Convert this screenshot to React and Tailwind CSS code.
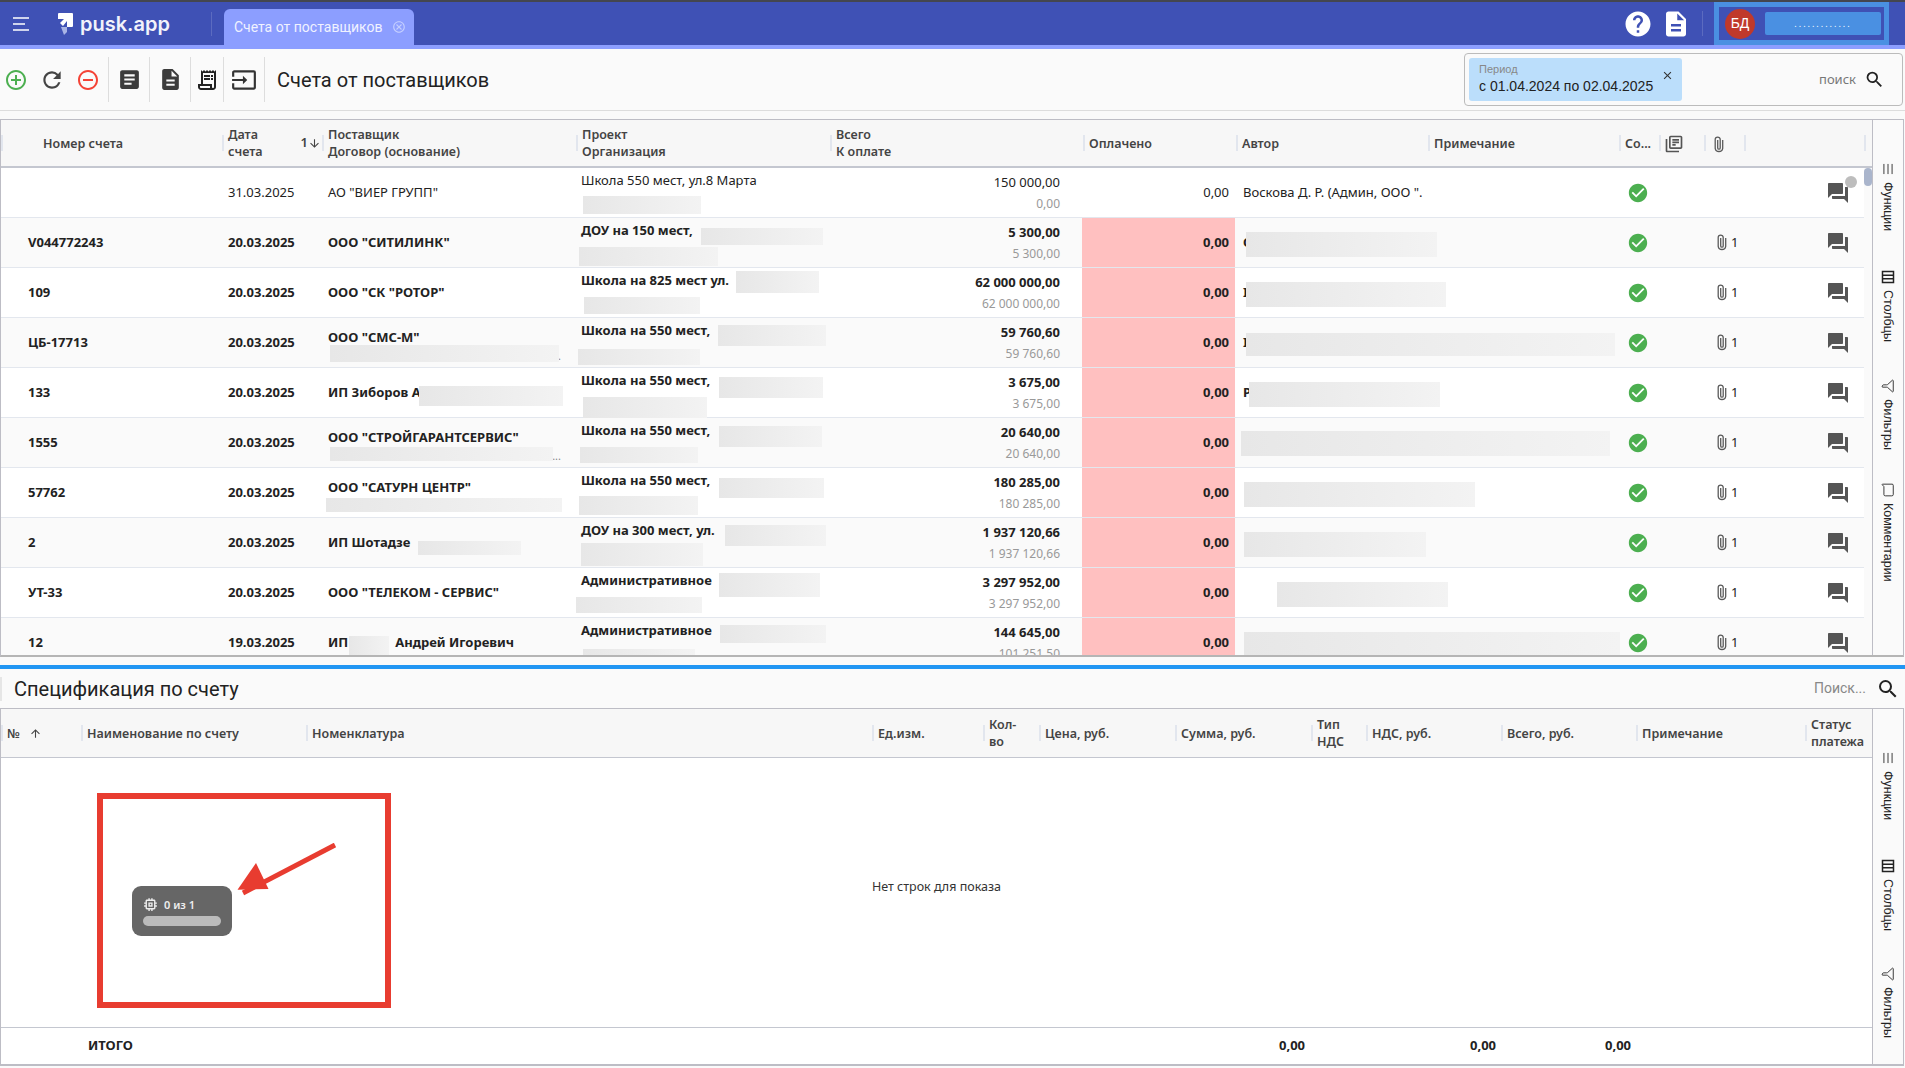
import { Menu, Filter, MessageSquare } from 'lucide-react';
import {
  MdAddCircleOutline, MdRefresh, MdRemoveCircleOutline, MdArticle, MdDescription, MdOutlineReceiptLong,
  MdOutlineInput, MdHelp, MdSearch, MdClose, MdCheckCircle, MdQuestionAnswer, MdOutlineLibraryBooks,
  MdMemory, MdArrowDownward, MdArrowUpward, MdOutlineCancel,
} from 'react-icons/md';

const mainCols = [
  { w: 'w-[221px]', pl: 'pl-[40px]', label: ['Номер счета'] },
  { w: 'w-[100px]', label: ['Дата', 'счета'], sort: true },
  { w: 'w-[254px]', label: ['Поставщик', 'Договор (основание)'] },
  { w: 'w-[254px]', label: ['Проект', 'Организация'] },
  { w: 'w-[253px]', label: ['Всего', 'К оплате'] },
  { w: 'w-[153px]', label: ['Оплачено'] },
  { w: 'w-[192px]', label: ['Автор'] },
  { w: 'w-[191px]', label: ['Примечание'] },
  { w: 'w-[40px]', label: ['Со...'] },
  { w: 'w-[45px]', icon: 'books' },
  { w: 'w-[40px]', icon: 'clip' },
  { w: 'w-[120px]', label: [] },
  { w: 'w-[1px]', label: [] },
];

const specCols = [
  { w: 'w-[80px]', label: ['№'], asc: true },
  { w: 'w-[225px]', label: ['Наименование по счету'] },
  { w: 'w-[566px]', label: ['Номенклатура'] },
  { w: 'w-[111px]', label: ['Ед.изм.'] },
  { w: 'w-[56px]', label: ['Кол-', 'во'] },
  { w: 'w-[136px]', label: ['Цена, руб.'] },
  { w: 'w-[136px]', label: ['Сумма, руб.'] },
  { w: 'w-[55px]', label: ['Тип', 'НДС'] },
  { w: 'w-[135px]', label: ['НДС, руб.'] },
  { w: 'w-[135px]', label: ['Всего, руб.'] },
  { w: 'w-[169px]', label: ['Примечание'] },
  { w: 'w-[67px]', label: ['Статус', 'платежа'] },
];

// blur = [x1, x2, top in row, height], the redacted bits of the screenshot
const rows = [
  { num: '', date: '31.03.2025', sup: 'АО "ВИЕР ГРУПП"', proj: 'Школа 550 мест, ул.8 Марта', total: '150 000,00', pay: '0,00', author: 'Воскова Д. Р. (Админ, ООО ".', plain: true, noClip: true,
    blurs: [[583, 701, 28, 18]] },
  { num: 'V044772243', date: '20.03.2025', sup: 'ООО "СИТИЛИНК"', proj: 'ДОУ на 150 мест,', total: '5 300,00', pay: '5 300,00', author: 'О',
    blurs: [[701, 823, 10, 17], [579, 718, 29, 19], [1246, 1437, 14, 25]] },
  { num: '109', date: '20.03.2025', sup: 'ООО "СК "РОТОР"', proj: 'Школа на 825 мест ул.', total: '62 000 000,00', pay: '62 000 000,00', author: 'I',
    blurs: [[736, 819, 3, 22], [584, 700, 29, 17], [1246, 1446, 14, 25]] },
  { num: 'ЦБ-17713', date: '20.03.2025', sup: 'ООО "СМС-М"', sup2: '...', proj: 'Школа на 550 мест,', total: '59 760,60', pay: '59 760,60', author: 'I',
    blurs: [[330, 559, 27, 17], [718, 826, 7, 21], [578, 700, 31, 16], [1246, 1615, 15, 23]] },
  { num: '133', date: '20.03.2025', sup: 'ИП Зиборов А', proj: 'Школа на 550 мест,', total: '3 675,00', pay: '3 675,00', author: 'Р',
    blurs: [[419, 563, 18, 20], [719, 823, 9, 21], [583, 707, 29, 23], [1249, 1440, 14, 25]] },
  { num: '1555', date: '20.03.2025', sup: 'ООО "СТРОЙГАРАНТСЕРВИС"', sup2: 'Н...', proj: 'Школа на 550 мест,', total: '20 640,00', pay: '20 640,00', author: '',
    blurs: [[330, 553, 29, 14], [719, 822, 8, 21], [580, 698, 29, 16], [1241, 1610, 13, 25]] },
  { num: '57762', date: '20.03.2025', sup: 'ООО "САТУРН ЦЕНТР"', sup2: '..', proj: 'Школа на 550 мест,', total: '180 285,00', pay: '180 285,00', author: '',
    blurs: [[326, 562, 30, 14], [719, 824, 10, 20], [579, 698, 28, 19], [1244, 1475, 14, 25]] },
  { num: '2', date: '20.03.2025', sup: 'ИП Шотадзе', proj: 'ДОУ на 300 мест, ул.', total: '1 937 120,66', pay: '1 937 120,66', author: '',
    blurs: [[418, 521, 23, 14], [725, 826, 7, 21], [581, 703, 25, 23], [1244, 1426, 14, 25]] },
  { num: 'УТ-33', date: '20.03.2025', sup: 'ООО "ТЕЛЕКОМ - СЕРВИС"', proj: 'Административное', total: '3 297 952,00', pay: '3 297 952,00', author: '',
    blurs: [[719, 820, 5, 24], [576, 702, 29, 16], [1277, 1448, 14, 25]] },
  { num: '12', date: '19.03.2025', sup: 'ИП', supTail: 'Андрей Игоревич', proj: 'Административное', total: '144 645,00', pay: '101 251,50', author: '',
    blurs: [[349, 389, 18, 19], [720, 826, 7, 18], [583, 695, 31, 16], [1244, 1620, 14, 25]] },
];

function Clip({ className }) {
  return (
    <svg viewBox="0 0 10 17" width="10" height="17" fill="none" stroke="#5a5a5a" strokeWidth="1.3" className={className}>
      <path d="M8.7 4v8.3a3.8 3.8 0 0 1-7.5 0V3.6a2.5 2.5 0 0 1 5 0v8.3a1.2 1.2 0 0 1-2.5 0V4" />
    </svg>
  );
}

function HeaderCell({ col }) {
  return (
    <div className={`${col.w} shrink-0 flex items-center relative h-full`}>
      <div className="w-[2px] h-[16px] bg-[#e2e6ee] shrink-0" />
      <div className={`${col.pl || 'pl-[4px]'} font-semibold text-[12.5px] leading-[17px] text-[#444] flex-1 whitespace-nowrap`}>
        {col.label && col.label.map(l => <div key={l}>{l}</div>)}
      </div>
      {col.sort && (
        <div className="flex items-center pr-[1px] font-semibold text-[13px] text-[#444]">1<MdArrowDownward size={13} /></div>
      )}
      {col.asc && <MdArrowUpward size={13} className="absolute left-[28px] top-[18px] text-[#444]" />}
      {col.icon === 'books' && <MdOutlineLibraryBooks size={20} className="absolute left-[5px] top-[14px] text-[#555]" />}
      {col.icon === 'clip' && <Clip className="absolute left-[10px] top-[16px]" />}
    </div>
  );
}

function Row({ r, i }) {
  const weight = r.plain ? 'font-normal' : 'font-bold';
  return (
    <div className={`relative flex h-[50px] shrink-0 border-b border-[#e3e7ee] text-[13px] text-[#222] ${i % 2 ? 'bg-[#fafafa]' : 'bg-white'} ${weight}`}>
      <div className="w-[220px] shrink-0 flex items-center pl-[27px]">{r.num}</div>
      <div className="w-[100px] shrink-0 flex items-center pl-[7px]">{r.date}</div>
      <div className="w-[254px] shrink-0 flex flex-col justify-center pl-[7px] relative whitespace-nowrap">
        {r.sup2 ? (
          <>
            <div className="-mt-[9px]">{r.sup}</div>
            <div className="absolute right-[14px] top-[30px] text-[11px] font-normal text-[#888]">{r.sup2}</div>
          </>
        ) : (
          <div className="flex">
            {r.sup}
            {r.supTail && <span className="ml-[47px]">{r.supTail}</span>}
          </div>
        )}
      </div>
      <div className="w-[254px] shrink-0 pl-[6px] pt-[3px] whitespace-nowrap">{r.proj}</div>
      <div className="w-[253px] shrink-0 pr-[22px] pt-[3px] text-right">
        <div className="leading-[22px]">{r.total}</div>
        <div className="leading-[22px] text-[12px] font-normal text-[#999]">{r.pay}</div>
      </div>
      <div className={`w-[153px] shrink-0 flex items-center justify-end pr-[6px] ${r.plain ? '' : 'bg-[#ffc0c0]'}`}>0,00</div>
      <div className="w-[192px] shrink-0 flex items-center pl-[8px] whitespace-nowrap">{r.author}</div>
      <div className="w-[191px] shrink-0" />
      <div className="w-[40px] shrink-0 flex items-center justify-center"><MdCheckCircle size={22} className="text-[#4caf50]" /></div>
      <div className="w-[45px] shrink-0" />
      <div className="w-[40px] shrink-0 flex items-center pl-[14px] gap-[4px] font-normal">
        {!r.noClip && <><Clip />1</>}
      </div>
      <div className="w-[120px] shrink-0 flex items-center justify-end pr-[13px]">
        <MdQuestionAnswer size={24} className="text-[#555]" />
      </div>
      {r.blurs.map(([a, b, t, h]) => (
        <div key={a} className="absolute bg-gradient-to-r from-[#e7e7e7] to-[#f3f3f3]" style={{ left: a - 1, width: b - a, top: t, height: h }} />
      ))}
    </div>
  );
}

function SideItem({ icon, label, h }) {
  return (
    <div className={`${h} flex flex-col items-center shrink-0`}>
      <div className="w-[14px] h-[14px] flex items-center justify-center">{icon}</div>
      <div className="[writing-mode:vertical-rl] mt-[6px] text-[12.5px] text-[#222] [font-family:'Liberation_Sans',sans-serif]">{label}</div>
    </div>
  );
}

const ColsIcon = (
  <svg viewBox="0 0 14 14" width="14" height="14" fill="none" stroke="#222" strokeWidth="1.5">
    <rect x="1.5" y="1.5" width="11" height="11" />
    <path d="M1.5 5.2h11M1.5 8.8h11" />
  </svg>
);
const MenuIcon = <Menu size={14} className="rotate-90 text-[#222]" strokeWidth={1.5} />;
const FilterIcon = <Filter size={14} className="rotate-90 text-[#222]" strokeWidth={1.5} />;
const CommentIcon = <MessageSquare size={14} className="rotate-90 text-[#222]" strokeWidth={1.5} />;

const Sep = () => <div className="w-px h-[45px] bg-[#ddd] shrink-0" />;

export default function App() {
  return (
    <div className="w-[1905px] h-[1068px] overflow-hidden bg-[#fafafa] flex flex-col [font-family:'Noto_Sans',sans-serif]">
      {/* top bar */}
      <div className="h-[49px] shrink-0 flex items-center bg-[#3f51b5] border-t-2 border-b-4 border-t-[#44464f] border-b-[#8c9eff] relative">
        <MdMenuIcon />
        <svg viewBox="0 0 16 22" width="16" height="22" className="ml-[29px]">
          <path d="M3 14l3 8 3-3V14z" fill="#a9b4e6" />
          <path d="M1 0h13a1 1 0 0 1 1 1v12a1 1 0 0 1-1 1H9V8l-4 5-3-3 4-4H0V1a1 1 0 0 1 1-1z" fill="#fff" />
        </svg>
        <span className="ml-[6px] text-[20px] leading-none font-semibold text-[#f2f3fb] [font-family:'Inter',sans-serif]">pusk.app</span>
        <div className="w-px h-[24px] bg-[#5c6bc0] ml-[41px]" />
        <div className="ml-[12px] w-[190px] h-[36px] self-end bg-[#8c9eff] rounded-t-[6px] flex items-center pl-[10px] text-[14px] text-[#f0f2ff] [font-family:'Roboto',sans-serif]">
          Счета от поставщиков
          <MdOutlineCancel size={14} className="ml-[10px] text-[#c5cfff]" />
        </div>
        <div className="ml-auto flex items-center h-full">
          <MdHelp size={30} className="text-white" />
          <MdDescription size={30} className="text-white ml-[8px]" />
          <div className="w-px h-[25px] bg-[#5c6bc0] ml-[11px]" />
          <div className="ml-[11px] mr-[16px] w-[175px] h-[43px] border-[5px] border-[#4a90e2] bg-[#3f51b5] flex items-center pl-[6px]">
            <div className="w-[30px] h-[30px] rounded-full bg-[#c0392b] flex items-center justify-center text-[14px] text-white [font-family:'Liberation_Sans',sans-serif]">БД</div>
            <div className="ml-[10px] h-[23px] w-[116px] bg-[#4a90e2] rounded-[2px] flex items-center justify-center text-[9px] text-white tracking-[2px]">.............</div>
          </div>
        </div>
      </div>

      {/* toolbar */}
      <div className="h-[62px] shrink-0 flex items-center border-b border-[#ddd]">
        <div className="w-[32px] flex justify-center"><MdAddCircleOutline size={24} className="text-[#4caf50]" /></div>
        <div className="w-[40px] flex justify-center"><MdRefresh size={26} className="text-[#444]" /></div>
        <div className="w-[32px] flex justify-center"><MdRemoveCircleOutline size={24} className="text-[#f44336]" /></div>
        <div className="w-[4px]" />
        <Sep />
        <div className="w-[40px] flex justify-center"><MdArticle size={25} className="text-[#3c3c3c]" /></div>
        <Sep />
        <div className="w-[40px] flex justify-center"><MdDescription size={25} className="text-[#3c3c3c]" /></div>
        <Sep />
        <div className="w-[32px] flex justify-center"><MdOutlineReceiptLong size={24} className="text-[#222]" /></div>
        <Sep />
        <div className="w-[40px] flex justify-center"><MdOutlineInput size={26} className="text-[#333]" /></div>
        <Sep />
        <div className="ml-[12px] text-[20px] text-[#222] [font-family:'Roboto',sans-serif]">Счета от поставщиков</div>
        <div className="ml-auto mr-[2px] w-[439px] h-[53px] border border-[#bbb] rounded-[4px] flex items-center pl-[4px] pr-[17px]">
          <div className="relative w-[213px] h-[43px] bg-[#bbdefb] rounded-[3px] pl-[10px] pt-[5px] [font-family:'Liberation_Sans',sans-serif]">
            <div className="text-[11px] leading-[13px] text-[#888]">Период</div>
            <div className="text-[14px] leading-[20px] text-[#222]">с 01.04.2024 по 02.04.2025</div>
            <MdClose size={13} className="absolute right-[8px] top-[11px] text-[#333]" />
          </div>
          <span className="ml-auto text-[13px] text-[#777]">поиск</span>
          <MdSearch size={21} className="ml-[8px] text-[#222]" />
        </div>
      </div>

      {/* main table */}
      <div className="mt-[8px] h-[538px] w-[1904px] shrink-0 flex border border-[#bdbdc5] border-b-2 border-b-[#b5b5b5] relative">
        <div className="w-[1871px] shrink-0 flex flex-col">
          <div className="h-[48px] shrink-0 flex items-center bg-[#f7f7f7] border-b-2 border-[#c4c7d0]">
            {mainCols.map((c, i) => <HeaderCell key={i} col={c} />)}
          </div>
          <div className="flex flex-1 min-h-0">
            <div className="w-[1863px] shrink-0 overflow-hidden flex flex-col">
              {rows.map((r, i) => <Row key={i} r={r} i={i} />)}
            </div>
            <div className="flex-1">
              <div className="h-[18px] w-full rounded-[4px] bg-[#aab5cc]" />
            </div>
          </div>
        </div>
        <div className="flex-1 border-l border-[#bdbdc5] flex flex-col items-center pt-[42px]">
          <SideItem h="h-[108px]" icon={MenuIcon} label="Функции" />
          <SideItem h="h-[109px]" icon={ColsIcon} label="Столбцы" />
          <SideItem h="h-[104px]" icon={FilterIcon} label="Фильтры" />
          <SideItem h="h-[100px]" icon={CommentIcon} label="Комментарии" />
        </div>
        <div className="absolute left-[1844px] top-[56px] w-[12px] h-[12px] rounded-full bg-[#bdbdbd]" />
      </div>

      {/* splitter */}
      <div className="mt-[8px] h-[4px] shrink-0 bg-[#2196f3]" />

      {/* spec title */}
      <div className="h-[39px] shrink-0 flex items-center">
        <div className="pl-[12px] border-l-2 border-[#e6e6e6] text-[20px] leading-[24px] text-[#222] [font-family:'Roboto',sans-serif]">Спецификация по счету</div>
        <span className="ml-auto text-[14px] text-[#888] [font-family:'Roboto',sans-serif]">Поиск...</span>
        <MdSearch size={24} className="ml-[10px] mr-[5px] text-[#222]" />
      </div>

      {/* spec table */}
      <div className="h-[358px] w-[1904px] shrink-0 flex border border-[#bdbdc5] border-b-2 relative">
        <div className="w-[1871px] shrink-0 flex flex-col">
          <div className="h-[49px] shrink-0 flex items-center bg-[#f7f7f7] border-b border-[#c4c7d0]">
            {specCols.map((c, i) => <HeaderCell key={i} col={c} />)}
          </div>
          <div className="flex-1 bg-white flex items-center justify-center pb-[11px] text-[12.5px] text-[#333]">Нет строк для показа</div>
          <div className="h-[37px] shrink-0 flex items-center border-t border-[#c4c7d0] bg-white font-bold text-[13px] text-[#222]">
            <div className="w-[1304px] shrink-0 flex items-center pl-[87px]">
              <span className="flex-1">ИТОГО</span>
              <span>0,00</span>
            </div>
            <div className="w-[191px] shrink-0 text-right">0,00</div>
            <div className="w-[135px] shrink-0 text-right">0,00</div>
          </div>
        </div>
        <div className="flex-1 border-l border-[#bdbdc5] flex flex-col items-center pt-[42px]">
          <SideItem h="h-[108px]" icon={MenuIcon} label="Функции" />
          <SideItem h="h-[108px]" icon={ColsIcon} label="Столбцы" />
          <SideItem h="h-[100px]" icon={FilterIcon} label="Фильтры" />
        </div>

        {/* annotation over the empty table */}
        <div className="absolute left-[96px] top-[84px] w-[294px] h-[215px] border-[6px] border-[#e83c30]">
          <div className="absolute left-[29px] top-[87px] w-[100px] h-[50px] rounded-[9px] bg-[#666] px-[12px] pt-[10px]">
            <div className="flex items-center gap-[5px] text-[11px] leading-[16px] font-semibold text-[#eee]">
              <MdMemory size={17} className="-ml-[2px] text-[#eee]" />0 из 1
            </div>
            <div className="mt-[3px] h-[10px] rounded-[5px] bg-[#bbb] -mx-[1px]" />
          </div>
          <svg viewBox="0 0 110 60" width="110" height="60" className="absolute left-[132px] top-[44px]">
            <path d="M8 50 L100 2" stroke="#e83c30" strokeWidth="5" fill="none" />
            <path d="M2.5 46.7 L21 20 L33.5 46 Z" fill="#e83c30" />
          </svg>
        </div>
      </div>
    </div>
  );
}

function MdMenuIcon() {
  return (
    <svg viewBox="0 0 16 14" width="16" height="14" className="ml-[13px]" fill="none" stroke="#fff" strokeWidth="1.6">
      <path d="M0 1h16M0 7h12M0 13h16" />
    </svg>
  );
}
